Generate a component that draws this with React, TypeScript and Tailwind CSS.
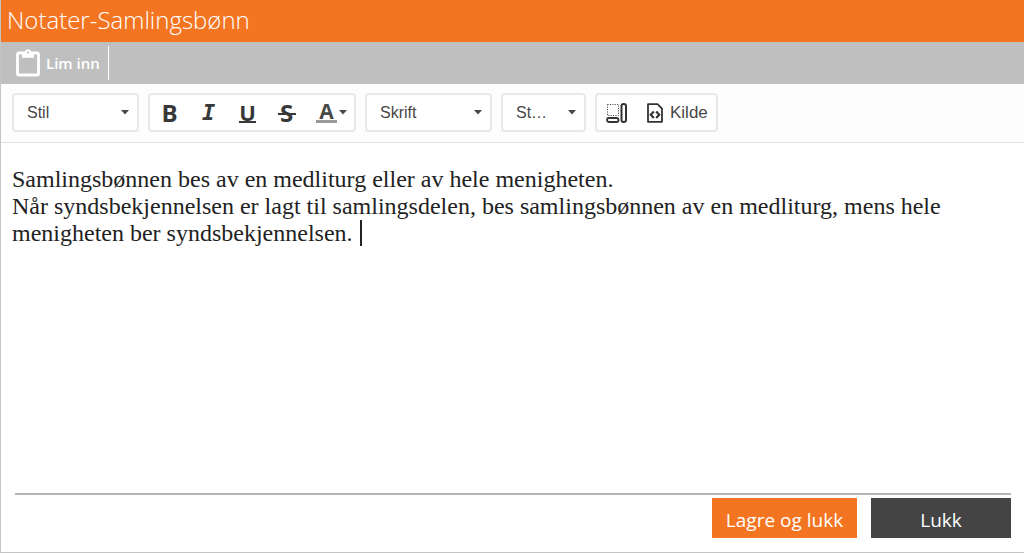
import { useState } from 'react';
import type { ReactNode } from 'react';

const NOTE = `Samlingsbønnen bes av en medliturg eller av hele menigheten.
Når syndsbekjennelsen er lagt til samlingsdelen, bes samlingsbønnen av en medliturg, mens hele menigheten ber syndsbekjennelsen.`;

function Arrow({ className = '' }: { className?: string }) {
  return (
    <svg viewBox="0 0 8 5" className={`w-2 h-[5px] ${className}`} fill="#484848" aria-hidden="true">
      <path d="M0 0h8L4 4.6z" />
    </svg>
  );
}

function Group({ children }: { children: ReactNode }) {
  return (
    <div className="flex h-[39px] rounded border-2 border-[#e8e8e8] bg-white">{children}</div>
  );
}

function Combo({ label, text, width }: { label: string; text: string; width: string }) {
  return (
    <Group>
      <div className={`relative flex items-center ${width}`}>
        <select
          aria-label={label}
          className="w-full h-full appearance-none bg-transparent pl-[13px] pr-6 text-base text-[#484848] outline-none"
        >
          <option>{text}</option>
        </select>
        <Arrow className="absolute right-2 pointer-events-none" />
      </div>
    </Group>
  );
}

function ToolButton({ title, children }: { title: string; children: ReactNode }) {
  return (
    <button
      title={title}
      className="w-[39px] flex items-center justify-center leading-none text-[#383838] hover:bg-gray-100"
    >
      {children}
    </button>
  );
}

function ClipboardIcon() {
  return (
    <svg viewBox="0 0 24 28" className="w-6 h-7" aria-hidden="true">
      <rect x="1.5" y="4" width="21" height="22" rx="1.6" fill="none" stroke="#fff" strokeWidth="2.8" />
      <path fill="#fff" d="M6 3h2.6a3.5 3.5 0 0 1 6.8 0H18v5.8H6z" />
      <circle cx="12" cy="3.4" r="1.1" fill="#bfbfbf" />
    </svg>
  );
}

function BlocksIcon() {
  return (
    <svg viewBox="0 0 22 22" className="w-[22px] h-[22px]" fill="none" stroke="#333" aria-hidden="true">
      <path d="M1.5 2.5h11v11h-11z" strokeDasharray="1 1.4" />
      <rect x="1" y="16" width="11.5" height="4" rx="2" strokeWidth="1.8" />
      <rect x="15.5" y="2" width="4.5" height="18" rx="2.2" strokeWidth="2" />
    </svg>
  );
}

function SourceIcon() {
  return (
    <svg viewBox="0 0 18 20" className="w-[18px] h-5" fill="none" stroke="#333" aria-hidden="true">
      <path d="M2 1.2h9.5L16 5.7v13.1H2z" strokeWidth="1.8" strokeLinejoin="round" />
      <path d="M7.8 8.6 4.8 11.8l3 3.2M10.2 8.6l3 3.2-3 3.2" strokeWidth="2.2" />
    </svg>
  );
}

export default function App() {
  const [note, setNote] = useState(NOTE);

  return (
    <div className="min-h-screen flex flex-col bg-white border-l border-b border-[#c4c4c4] font-['Open_Sans',sans-serif]">
      <header className="h-[42px] flex items-center px-1.5 pb-0.5 bg-[#f47521]">
        <h1 className="text-2xl font-light text-white">Notater-Samlingsbønn</h1>
      </header>

      <div className="h-[42px] flex items-center px-[15px] bg-[#bfbfbf]">
        <button className="h-[34px] flex items-center gap-1.5 pr-2 border-r border-white text-[15px] font-semibold text-white">
          <ClipboardIcon />
          Lim inn
        </button>
      </div>

      {/* Formatting toolbar */}
      <div className="flex flex-wrap gap-[9px] px-[11px] pt-[9px] pb-2.5 border-b border-[#dedede] bg-[#fdfdfd] font-['Liberation_Sans',sans-serif]">
        <Combo label="Stil" text="Stil" width="w-[123px]" />
        <Group>
          <ToolButton title="Fet">
            <span className="font-['Open_Sans'] text-2xl leading-none font-bold">B</span>
          </ToolButton>
          <ToolButton title="Kursiv">
            <span className="font-['DejaVu_Sans_Mono'] text-[22px] leading-none font-bold italic">I</span>
          </ToolButton>
          <ToolButton title="Understreking">
            <span className="font-['Open_Sans'] text-[22px] leading-[18px] font-bold border-b-2 border-[#383838]">U</span>
          </ToolButton>
          <ToolButton title="Gjennomstreking">
            <span className="relative w-[18px] font-['Open_Sans'] text-2xl leading-none font-bold">
              S
              <span className="absolute inset-x-0 top-1/2 h-0.5 bg-[#383838]" />
            </span>
          </ToolButton>
          <button title="Tekstfarge" className="w-12 flex items-center gap-0.5 pl-2.5 leading-none text-[#484848] hover:bg-gray-100">
            <span className="w-[21px] font-['Open_Sans'] text-[21px] leading-[18px] font-bold border-b-[3px] border-[#999]">A</span>
            <Arrow />
          </button>
        </Group>
        <Combo label="Skrift" text="Skrift" width="w-[123px]" />
        <Combo label="Størrelse" text="St…" width="w-[81px]" />
        <Group>
          <ToolButton title="Vis blokker">
            <BlocksIcon />
          </ToolButton>
          <button className="flex items-center gap-1.5 pl-2.5 pr-2 text-[17px] text-[#484848] hover:bg-gray-100">
            <SourceIcon />
            Kilde
          </button>
        </Group>
      </div>

      <div className="relative grow flex">
        <textarea
          aria-label="Notat"
          spellCheck={false}
          value={note}
          onChange={(e) => setNote(e.target.value)}
          className="grow resize-none px-[11px] pt-[23px] bg-transparent font-['Liberation_Serif',serif] text-2xl leading-[27px] text-[#222] outline-none"
        />
        <span className="absolute left-[359px] top-[77px] w-0.5 h-[26px] bg-[#222]" />
      </div>

      <footer className="ml-[14px] mr-[13px] mb-[14px] pt-[3px] flex justify-end gap-[14px] border-t-2 border-[#b5b5b5] text-[19px] font-medium text-white">
        <button className="w-[145px] h-10 pt-1 bg-[#f47521]">Lagre og lukk</button>
        <button className="w-[140px] h-10 pt-1 bg-[#444]">Lukk</button>
      </footer>
    </div>
  );
}
